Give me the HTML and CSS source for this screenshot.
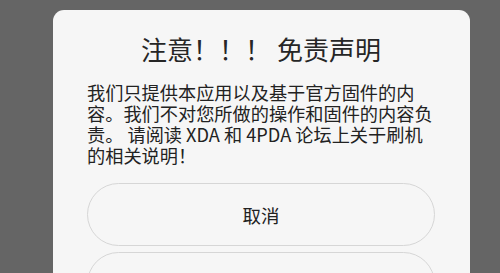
FILE: index.html
```html
<!DOCTYPE html>
<html lang="zh-CN">
<head>
<meta charset="utf-8">
<title>免责声明</title>
<link rel="stylesheet" href="styles.css">
</head>
<body>
<div class="screen">
  <div class="dialog">
    <h1 class="title">注意！！！ 免责声明</h1>
    <p class="message">我们只提供本应用以及基于官方固件的内容。我们不对您所做的操作和固件的内容负责。 请阅读 XDA 和 4PDA 论坛上关于刷机的相关说明！</p>
    <div class="actions">
      <button class="btn">取消</button>
      <button class="btn"></button>
    </div>
  </div>
</div>
</body>
</html>
```
FILE: styles.css
```css
html, body {
  margin: 0;
  padding: 0;
  width: 500px;
  height: 273px;
  overflow: hidden;
  background: #656565;
}

.screen {
  width: 500px;
  height: 273px;
  padding-top: 10px;
  padding-left: 53px;
  box-sizing: border-box;
}

.dialog {
  width: 417px;
  height: 400px;
  box-sizing: border-box;
  padding: 21px 35px 0 34px;
  background: #f6f6f6;
  border-radius: 11px;
  font-family: "Noto Sans CJK SC", "Noto Sans", sans-serif;
  color: #222;
}

.title {
  margin: 0;
  font-size: 26px;
  line-height: 36px;
  font-weight: 400;
  text-align: center;
  color: #262626;
}

.message {
  margin: 15px 0 0;
  font-size: 18.2px;
  line-height: 21px;
  width: 348px;
}

.actions {
  margin-top: 17px;
  display: flex;
  flex-direction: column;
  gap: 6px;
}

.btn {
  width: 348px;
  height: 63px;
  border: 1px solid #d6d6d6;
  border-radius: 32px;
  background: #f6f6f6;
  font-family: "Noto Sans CJK SC", "Noto Sans", sans-serif;
  font-size: 18.5px;
  color: #222;
  padding: 0;
}
```
